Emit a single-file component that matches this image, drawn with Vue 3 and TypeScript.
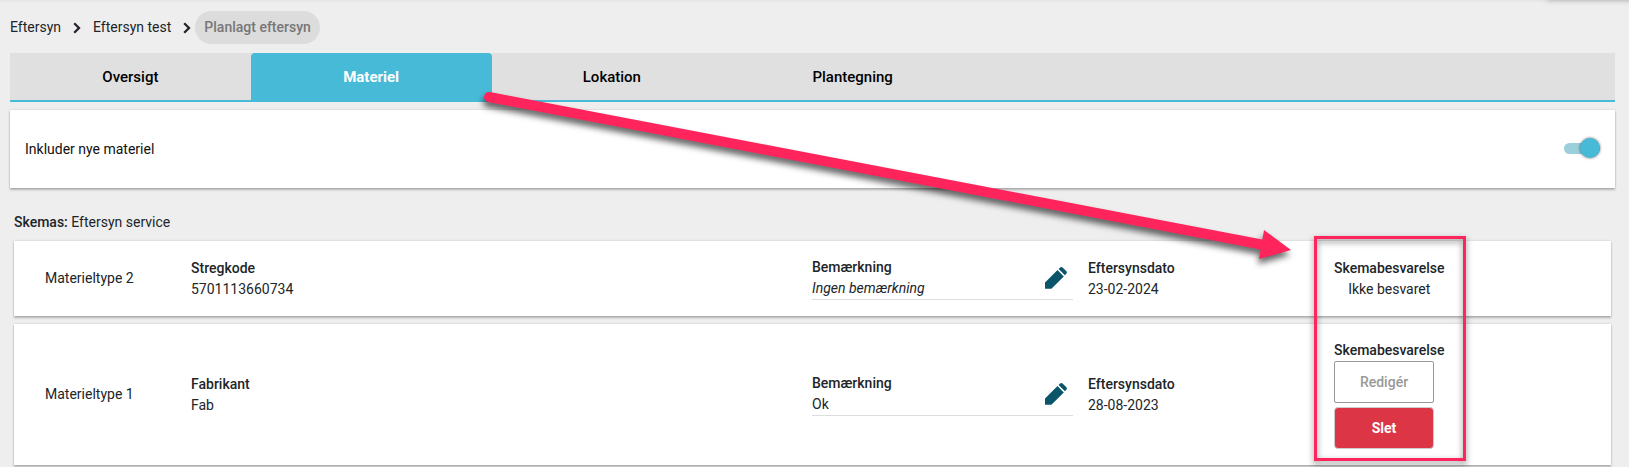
<script setup lang="ts">
import { ref } from 'vue'

interface Material {
  type: string
  field: string
  value: string
  remark: string
  date: string
  answered: boolean
}

const tabs = ['Oversigt', 'Materiel', 'Lokation', 'Plantegning']
const activeTab = ref('Materiel')
const includeNew = ref(true)

const materials: Material[] = [
  { type: 'Materieltype 2', field: 'Stregkode', value: '5701113660734', remark: '', date: '23-02-2024', answered: false },
  { type: 'Materieltype 1', field: 'Fabrikant', value: 'Fab', remark: 'Ok', date: '28-08-2023', answered: true },
]
</script>

<template>
  <div class="page">
    <nav class="crumbs" aria-label="Brødkrumme">
      <a href="#">Eftersyn</a>
      <svg class="chevron" viewBox="0 0 8 12" aria-hidden="true"><path d="M1.2 1.2 6 6 1.2 10.8" /></svg>
      <a href="#">Eftersyn test</a>
      <svg class="chevron last" viewBox="0 0 8 12" aria-hidden="true"><path d="M1.2 1.2 6 6 1.2 10.8" /></svg>
      <span class="current" aria-current="page">Planlagt eftersyn</span>
    </nav>

    <div class="tabs" role="tablist">
      <button
        v-for="tab in tabs"
        :key="tab"
        type="button"
        role="tab"
        class="tab"
        :class="{ active: tab === activeTab }"
        :aria-selected="tab === activeTab"
        @click="activeTab = tab"
      >{{ tab }}</button>
    </div>

    <main>
      <section class="card include">
        <label for="include-new">Inkluder nye materiel</label>
        <input id="include-new" v-model="includeNew" class="switch" type="checkbox" role="switch" />
      </section>

      <p class="schemas"><strong>Skemas:</strong> Eftersyn service</p>

      <div class="rows">
        <article v-for="item in materials" :key="item.type" class="card row">
          <div>{{ item.type }}</div>
          <div><strong>{{ item.field }}</strong><span>{{ item.value }}</span></div>
          <div class="remark">
            <div>
              <strong>Bemærkning</strong>
              <span v-if="item.remark">{{ item.remark }}</span>
              <em v-else>Ingen bemærkning</em>
            </div>
            <button type="button" class="edit" aria-label="Redigér bemærkning">
              <svg viewBox="0 0 22 22" aria-hidden="true">
                <path d="M0 15.6 12.5 3.1 18.8 9.4 6.4 21.8H0zM13.6 2 15.1.6Q16.4-.5 17.8.7L21.2 4Q22.5 5.4 21.3 6.8L19.9 8.3z" />
              </svg>
            </button>
          </div>
          <div><strong>Eftersynsdato</strong><span>{{ item.date }}</span></div>
          <div class="answer">
            <strong>Skemabesvarelse</strong>
            <template v-if="item.answered">
              <button type="button" class="btn outline">Redigér</button>
              <button type="button" class="btn danger">Slet</button>
            </template>
            <span v-else class="centered">Ikke besvaret</span>
          </div>
        </article>
      </div>
    </main>

    <svg class="annotation" viewBox="0 0 1629 467" aria-hidden="true">
      <g class="arrow">
        <path class="shaft" d="M489 97 1264 245" />
        <path class="head" d="M1264 230 1291 250 1259 259z" />
      </g>
      <rect class="frame" x="1315.5" y="237.5" width="149" height="222" />
    </svg>
  </div>
</template>

<style>
body {
  margin: 0;
  background: #eee;
  overflow: hidden;
}
</style>

<style scoped>
.page {
  position: relative;
  box-sizing: border-box;
  padding: 11px 14px 8px 10px;
  background: linear-gradient(#e4e4e4, #eee 3px);
  color: #212529;
  font: 14px/21px Roboto, "Liberation Sans", sans-serif;
}
.page::before {
  content: "";
  position: absolute;
  top: -8px;
  right: -8px;
  width: 90px;
  height: 8px;
  box-shadow: 0 0 6px rgba(0, 0, 0, 0.25);
}
strong { font-weight: 500; }
button { font: inherit; cursor: pointer; }

.crumbs {
  display: flex;
  align-items: center;
  height: 33px;
  margin-bottom: 9px;
}
.crumbs a { color: #212529; text-decoration: none; }
.chevron {
  width: 8px;
  height: 12px;
  margin: 0 12px;
  fill: none;
  stroke: #212529;
  stroke-width: 2.3;
}
.chevron.last { margin-right: 4px; }
.current {
  padding: 6px 9px;
  border-radius: 17px;
  background: #dcdcdc;
  color: #777;
  font-weight: 500;
}

.tabs {
  display: flex;
  background: #e0e0e0;
  border-bottom: 2px solid #46bad6;
}
.tab {
  width: 15%;
  height: 47px;
  padding: 2px 0 0;
  border: 0;
  background: transparent;
  color: #000;
  font-weight: 500;
  font-size: 15px;
}
.tab.active {
  background: #46bad6;
  color: #fff;
  border-radius: 4px 4px 0 0;
  font-weight: 700;
}

.card {
  background: #fff;
  box-shadow: 0 2px 2px rgba(0, 0, 0, 0.24), 0 0 2px rgba(0, 0, 0, 0.16);
}
.include {
  display: flex;
  align-items: center;
  justify-content: space-between;
  height: 78px;
  margin-top: 8px;
  padding: 0 15px;
  box-sizing: border-box;
  color: #111;
}
.switch {
  appearance: none;
  display: flex;
  align-items: center;
  justify-content: flex-end;
  width: 36px;
  height: 11px;
  margin: 0 0 2px;
  border-radius: 6px;
  background: #9bcfdc;
  cursor: pointer;
}
.switch::before {
  content: "";
  width: 20px;
  height: 20px;
  border-radius: 50%;
  background: #46bad6;
  box-shadow: 0 0 3px rgba(0, 0, 0, 0.6);
}
.switch:not(:checked) { justify-content: flex-start; }

.schemas { margin: 24px 4px 8px; }
.rows {
  display: grid;
  gap: 8px;
  margin: 0 4px;
}
.row {
  display: grid;
  grid-template-columns: 146fr 621fr 276fr 246fr 277fr;
  align-items: center;
  padding: 16px 0 16px 31px;
}
.row strong, .row span, .row em { display: block; }
.remark {
  display: flex;
  align-items: center;
  justify-content: space-between;
  margin-right: 15px;
  border-bottom: 1px solid #ddd;
}
.edit {
  display: flex;
  margin-right: 6px;
  padding: 0;
  border: 0;
  background: none;
}
.edit svg { width: 22px; height: 22px; fill: #0b556b; }
.answer { justify-self: start; }
.centered { text-align: center; }
.btn {
  display: block;
  box-sizing: border-box;
  width: 100px;
  height: 42px;
  border: 1px solid #999;
  border-radius: 2px;
  background: #fff;
  color: #999;
  font-weight: 500;
}
.btn.danger {
  margin-top: 4px;
  border-color: #ccc;
  border-radius: 4px;
  background: #dc3545;
  color: #fff;
  font-weight: 700;
}

.annotation {
  position: absolute;
  top: 0;
  left: 0;
  width: 100%;
  pointer-events: none;
}
.arrow { filter: drop-shadow(-1px 5px 3px rgba(0, 0, 0, 0.6)); }
.shaft { fill: none; stroke: #ff245c; stroke-width: 10; stroke-linecap: round; }
.head { fill: #ff245c; }
.frame {
  fill: none;
  stroke: #ff245c;
  stroke-width: 3;
  filter: drop-shadow(0 3px 3px rgba(0, 0, 0, 0.5));
}
</style>
